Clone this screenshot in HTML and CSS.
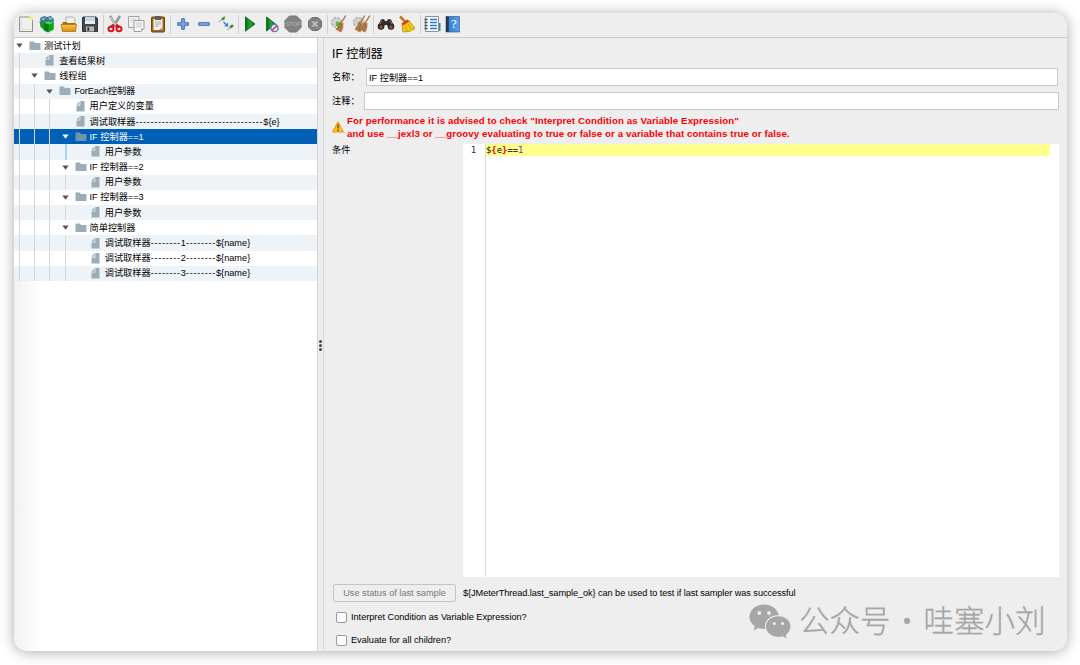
FILE: index.html
```html
<!DOCTYPE html>
<html lang="zh-CN">
<head>
<meta charset="utf-8">
<title>JMeter</title>
<link rel="stylesheet" href="styles.css">
</head>
<body>
<svg class="defs" width="0" height="0">
  <defs>
    <linearGradient id="green" x1="0" x2="1"><stop offset="0" stop-color="#0c6a14"/><stop offset=".5" stop-color="#22a52b"/><stop offset="1" stop-color="#087010"/></linearGradient>
    <linearGradient id="gold" x1="0" x2="0" y1="0" y2="1"><stop offset="0" stop-color="#f6c552"/><stop offset="1" stop-color="#d9900f"/></linearGradient>
    <linearGradient id="blue" x1="0" x2="1"><stop offset="0" stop-color="#2f77cf"/><stop offset="1" stop-color="#5a9de8"/></linearGradient>
    <symbol id="folder" viewBox="0 0 12 10"><path d="M.5 .5h4.200l1.300 1.500h5.500v7H.5z" fill="currentColor"/></symbol>
    <symbol id="leaf" viewBox="0 0 9 11"><path d="M4.300 0h4.200v10.600H.5V4.600h3.800z" fill="currentColor"/><path d="M3.500.2v3.600H.5z" fill="currentColor"/></symbol>
    <symbol id="arrow" viewBox="0 0 7 5"><path d="M.3.5h6.400L3.500 4.700z" fill="currentColor"/></symbol>
    <symbol id="broom" viewBox="0 0 12 18"><path d="M10.800.5 6.500 7.500" stroke="#a67340" stroke-width="1.400"/><path d="M5.200 6.500 8.500 8.300Q9 13 6.500 17.500L.5 14.500Q4 11 5.200 6.500z" fill="#b98450"/><path d="M5.500 8 2 15M7 8.500 4.500 16.500" stroke="#875328" stroke-width=".7"/></symbol>
    <symbol id="gear" viewBox="0 0 14 14"><circle cx="7" cy="7" r="5.200" fill="#d3d5d2" stroke="#b8b8b8" stroke-width="2" stroke-dasharray="2.900 1.200"/><circle cx="8.500" cy="8.500" r="2.500" fill="#5cb832"/></symbol>
  </defs>
</svg>
<div class="window">
  <header class="toolbar">
    <svg class="tool new" viewBox="0 0 18 18"><path d="M2.500 2h13v14.500h-13z" fill="#eef0e9" stroke="#8f928c"/><path d="M4.500 4v10.500h9" fill="none" stroke="#dcdeda"/><circle cx="14.500" cy="3" r="2.300" fill="#fbf3a0"/><circle cx="14.500" cy="3" r="1" fill="#f2df3c"/></svg>
    <svg class="tool templates" viewBox="0 0 18 18"><path d="m2 3 4-2 3 1 4-1 3 3-1 6-8 3-4-3z" fill="#3b7792"/><path d="m3 4 3-1.500 2 1-3 2zM10 3l3-1 2 2-3 1z" fill="#8fb7cb"/><path d="M1.500 6 6 7.500V15l-3.500-3z" fill="#179528"/><path d="m6 8 4-1.500 6 1-.3 7L10 17.500l-4-2z" fill="#0fa51b"/><path d="m6 8 5 1.500 5-2-6-1.200z" fill="#4bd548"/><path d="m11 9.500-.5 7.700L6 15.300V8z" fill="#087c14"/></svg>
    <svg class="tool open" viewBox="0 0 18 18"><path d="M6 2h7l2 2v6H6z" fill="#eee" stroke="#999" stroke-width=".7"/><path d="M2.500 7h4l1 1h8v8h-13z" fill="#a86c16"/><path d="M1 9.500h15.500l-1 7h-13z" fill="url(#gold)" stroke="#b1730f" stroke-width=".8"/></svg>
    <svg class="tool save" viewBox="0 0 18 18"><path d="M2 2h13l1.500 1.500V16.500h-15V2.500z" fill="#42474b" stroke="#2e3338"/><path d="M4 2h10v7H4z" fill="#e3edf4"/><path d="M4 3h10M4 5h10" stroke="#a9bccb"/><path d="M5 11.500h8v5H5z" fill="#b7b9bb"/><path d="M6.300 12.500h2v3.300h-2z" fill="#333"/></svg>
    <i class="separator"></i>
    <svg class="tool cut" viewBox="0 0 18 18"><path d="m4 1 7 11M14 1 7 12" stroke="#969b9f" stroke-width="2.600"/><path d="m4.500 2 6 9" stroke="#e3e5e7"/><path d="m8 10-3 2M10 10l3 2" stroke="#d31622" stroke-width="3"/><ellipse cx="5" cy="14" rx="2.500" ry="2.200" fill="none" stroke="#d9141f" stroke-width="2"/><ellipse cx="13" cy="14" rx="2.500" ry="2.200" fill="none" stroke="#d9141f" stroke-width="2"/></svg>
    <svg class="tool copy" viewBox="0 0 18 18"><path d="M1.500 1.500h10.500v11H1.500z" fill="#f2f2f2" stroke="#a2a2a2"/><path d="M3.500 4h6M3.500 6h6" stroke="#ccc"/><path d="M7 5.500h10v8l-3 3H7z" fill="#f6f6f6" stroke="#9b9b9b"/><path d="M9 8h6M9 10h6M9 12h5" stroke="#bbb" stroke-width=".8"/><path d="M14 16.500v-3h3z" fill="#aaa"/></svg>
    <svg class="tool paste" viewBox="0 0 18 18"><rect x="2.500" y="2" width="13" height="15" rx="1" fill="#a86414" stroke="#734008"/><path d="M4.500 4h9v11h-9z" fill="#f0f1ee"/><path d="M6 7h6M6 9h6M6 11h4" stroke="#aaa"/><path d="M6 1h6v4H6z" fill="#5a5c59"/><path d="m10 15 3.500-3v3z" fill="#999"/></svg>
    <i class="separator"></i>
    <svg class="tool plus" viewBox="0 0 18 18"><path d="M7.700 3.700h2.600v4h4v2.600h-4v4H7.700v-4h-4V7.700h4z" fill="#7fa9df" stroke="#356eaf"/></svg>
    <svg class="tool minus" viewBox="0 0 18 18"><path d="M3.700 7.700h10.600v2.600H3.700z" fill="#86afe2" stroke="#356eaf"/></svg>
    <svg class="tool toggle" viewBox="0 0 18 18"><path d="m1.500 7 5-3.500M10 15l4-3" stroke="#c3c8c0" stroke-width="2"/><path d="m5 4.500 2.500-1.800M13 12.500l3-2.300" stroke="#43853b" stroke-width="2.600"/><circle cx="7.500" cy="2.200" r="1" fill="#83bc57"/><path d="m6.500 7 4 4m0-3v3h-3" fill="none" stroke="#2e78ce" stroke-width="1.200"/></svg>
    <i class="separator"></i>
    <svg class="tool start" viewBox="0 0 18 18"><path d="M4.500 2v14L14 9z" fill="url(#green)" stroke="#12741b"/></svg>
    <svg class="tool no-pause" viewBox="0 0 18 18"><path d="M3.500 2v14l9-7z" fill="url(#green)" stroke="#12741b"/><circle cx="11.500" cy="13" r="3.600" fill="#e9f0fb" stroke="#4979bf" stroke-width="1.300"/><path d="m9 15.500 5-5" stroke="#df3434" stroke-width="1.600"/></svg>
    <svg class="tool stop" viewBox="0 0 18 18"><path d="M5.500 1h7L17 5.500v7L12.500 17h-7L1 12.500v-7z" fill="#828282" stroke="#777"/><text class="stop-text" x="9" y="11.300">STOP</text></svg>
    <svg class="tool shutdown" viewBox="0 0 18 18"><path d="M6 2.500h6L15.500 6v6L12 15.500H6L2.500 12V6z" fill="#828282" stroke="#737373"/><path d="m6.500 6.500 5 5m0-5-5 5" stroke="#bcbcbc" stroke-width="1.900"/></svg>
    <i class="separator"></i>
    <svg class="tool clear" viewBox="0 0 18 18"><use href="#gear" x="0" y="1" width="13" height="13"/><use href="#broom" x="5" y="0" width="12" height="18"/></svg>
    <svg class="tool clear-all" viewBox="0 0 18 18"><use href="#gear" x="0" y="1" width="13" height="13"/><use href="#broom" x="2" y="0" width="12" height="18"/><use href="#broom" x="7" y="0" width="12" height="18"/></svg>
    <i class="separator"></i>
    <svg class="tool search" viewBox="0 0 18 18"><path d="M4 4.500 7 4l1 2h2l1-2 3 .5L17 11l-5 2-2-3H8l-2 3-5-2z" fill="#30302f"/><circle cx="4" cy="11.500" r="3.300" fill="#2b2928"/><circle cx="14" cy="11.500" r="3.300" fill="#2b2928"/><circle cx="4" cy="12" r="1.700" fill="#96502c"/><circle cx="14" cy="12" r="1.700" fill="#96502c"/><path d="m5 6-2 3m10-3 2 3" stroke="#777"/></svg>
    <svg class="tool search-reset" viewBox="0 0 18 18"><path d="m2 1.500 5 5" stroke="#c07a22" stroke-width="2.600"/><path d="m4 9.500 7-4 6 8q-5 4-12 3.500z" fill="#f2cd16" stroke="#b88c05" stroke-width=".8"/><path d="m3.500 8.500 6-4 1.700 2-6.200 4z" fill="#dc3326"/><path d="m7 10.500 2 5m1-6.500 3.500 5" stroke="#b98f07" stroke-width=".8"/></svg>
    <i class="separator"></i>
    <svg class="tool functions" viewBox="0 0 18 18"><path d="M14 8h3.500v4H14z" fill="#3c72c0"/><path d="M14 12h3.500v4H14z" fill="#32a850"/><path d="M2.500 1.500h13v15h-13z" fill="#f6f9fd" stroke="#8894a1"/><path d="M7 4.500h7M7 7.500h7M7 10.500h7M7 13.500h7" stroke="#3978d5" stroke-width="1.400"/><path d="M1.500 4.500h3M1.500 7.500h3M1.500 10.500h3M1.500 13.500h3" stroke="#444" stroke-width="1.300"/></svg>
    <svg class="tool help" viewBox="0 0 18 18"><path d="M2 1.500h13.500v15.500H2z" fill="url(#blue)" stroke="#315f9f" stroke-width=".7"/><path d="M2 1.500h2.800V17H2z" fill="#2b394c"/><text class="help-text" x="10" y="13.300">?</text></svg>
  </header>
  <main class="body">
    <nav class="tree">
      <div class="row"><svg class="arrow"><use href="#arrow"/></svg><svg class="folder"><use href="#folder"/></svg><span>测试计划</span></div>
      <div class="row"><i></i><b></b><svg class="leaf"><use href="#leaf"/></svg><span>查看结果树</span></div>
      <div class="row"><i></i><svg class="arrow"><use href="#arrow"/></svg><svg class="folder"><use href="#folder"/></svg><span>线程组</span></div>
      <div class="row"><i></i><i></i><svg class="arrow"><use href="#arrow"/></svg><svg class="folder"><use href="#folder"/></svg><span class="foreach">ForEach控制器</span></div>
      <div class="row"><i></i><i></i><i></i><b></b><svg class="leaf"><use href="#leaf"/></svg><span>用户定义的变量</span></div>
      <div class="row"><i></i><i></i><i></i><b></b><svg class="leaf"><use href="#leaf"/></svg><span>调试取样器<em class="long">----------------------------------</em>${e}</span></div>
      <div class="row selected"><i></i><i></i><i></i><svg class="arrow"><use href="#arrow"/></svg><svg class="folder"><use href="#folder"/></svg><span>IF 控制器==1</span></div>
      <div class="row"><i></i><i></i><i></i><i class="active"></i><b></b><svg class="leaf"><use href="#leaf"/></svg><span>用户参数</span></div>
      <div class="row"><i></i><i></i><i></i><svg class="arrow"><use href="#arrow"/></svg><svg class="folder"><use href="#folder"/></svg><span>IF 控制器==2</span></div>
      <div class="row"><i></i><i></i><i></i><i></i><b></b><svg class="leaf"><use href="#leaf"/></svg><span>用户参数</span></div>
      <div class="row"><i></i><i></i><i></i><svg class="arrow"><use href="#arrow"/></svg><svg class="folder"><use href="#folder"/></svg><span>IF 控制器==3</span></div>
      <div class="row"><i></i><i></i><i></i><i></i><b></b><svg class="leaf"><use href="#leaf"/></svg><span>用户参数</span></div>
      <div class="row"><i></i><i></i><i></i><svg class="arrow"><use href="#arrow"/></svg><svg class="folder"><use href="#folder"/></svg><span>简单控制器</span></div>
      <div class="row"><i></i><i></i><i></i><i></i><b></b><svg class="leaf"><use href="#leaf"/></svg><span>调试取样器<em>--------</em>1<em>--------</em>${name}</span></div>
      <div class="row"><i></i><i></i><i></i><i></i><b></b><svg class="leaf"><use href="#leaf"/></svg><span>调试取样器<em>--------</em>2<em>--------</em>${name}</span></div>
      <div class="row"><i></i><i></i><i></i><i></i><b></b><svg class="leaf"><use href="#leaf"/></svg><span>调试取样器<em>--------</em>3<em>--------</em>${name}</span></div>
    </nav>
    <div class="splitter"><span></span><span></span><span></span></div>
    <section class="panel">
      <h1>IF 控制器</h1>
      <label class="field name"><span>名称<em>：</em></span><input type="text" value="IF 控制器==1"></label>
      <label class="field comment"><span>注释<em>：</em></span><input type="text"></label>
      <div class="warning">
        <svg viewBox="0 0 12 12"><path d="M6 .8 11.500 11H.5z" fill="#ffc21e" stroke="#ee9315" stroke-linejoin="round"/><path d="M6 3.500v4M6 8.500V10" stroke="#5b3a10" stroke-width="1.300"/></svg>
        <div><p class="w1">For performance it is advised to check "Interpret Condition as Variable Expression"</p><p class="w2">and use __jexl3 or __groovy evaluating to true or false or a variable that contains true or false.</p></div>
      </div>
      <div class="condition">
        <span class="caption">条件</span>
        <div class="editor"><div class="gutter">1</div><div class="code"><div class="line">$<b>{</b>e<b>}</b>==<u>1</u></div></div></div>
      </div>
      <div class="status"><button>Use status of last sample</button><span>${JMeterThread.last_sample_ok} can be used to test if last sampler was successful</span></div>
      <label class="check interpret"><input type="checkbox"><span>Interpret Condition as Variable Expression?</span></label>
      <label class="check evaluate"><input type="checkbox"><span>Evaluate for all children?</span></label>
    </section>
  </main>
</div>
<div class="watermark">
  <svg viewBox="0 0 42 35"><path d="M15 .5C6.800.5.500 6 .500 12.800c0 3.900 2 7 5.200 9.200L4.500 26.500l5-2.500c1.800.6 3.600.9 5.500.9h1.300C14.500 17 21 10.800 29.800 11.300 28.500 5 22.500.5 15 .5z" fill="#a6a6a6"/><path d="M29.300 12.300c-7 0-12.300 4.700-12.300 10.300s5.300 10.300 12.300 10.300c1.600 0 3-.3 4.400-.7l4 2.200-1-3.500c2.900-1.900 4.800-4.900 4.800-8.300 0-5.600-5.200-10.300-12.200-10.300z" fill="#a6a6a6"/><g fill="#eee"><circle cx="10.300" cy="9" r="1.900"/><circle cx="20" cy="9" r="1.900"/><circle cx="25.300" cy="19.500" r="1.600"/><circle cx="33.500" cy="19.500" r="1.600"/></g></svg>
  <span class="wm1">公众号</span><span class="dot">·</span><span class="wm2">哇塞小刘</span>
</div>
</body>
</html>
```
FILE: styles.css
```css
* { box-sizing: border-box; }
body { margin: 0; padding: 13px 14px 14px; width: 1080px; height: 665px; overflow: hidden; background: #fff; font: 9.2px/15px "Liberation Sans", "Noto Sans CJK SC", sans-serif; color: #000; }
.defs { position: absolute; }
.window { width: 1053px; height: 638px; border-radius: 13px; overflow: hidden; background: #eee; box-shadow: 0 1px 14px rgba(0,0,0,.34); display: flex; flex-direction: column; }
.toolbar { height: 25px; flex: none; display: flex; align-items: center; padding: 0 0 2px 3px; border-bottom: 1px solid #c9c9c9; }
.tool { width: 18px; height: 18px; margin-right: 3.4px; flex: none; }
.separator { width: 1px; height: 19px; background: #d1d1d1; margin: 0 2.5px 0 0; flex: none; }
.stop-text { font: 700 5.5px "Liberation Sans", sans-serif; text-anchor: middle; fill: #a9a9a9; }
.help-text { font: 13px "Liberation Serif", serif; text-anchor: middle; fill: #fff; }
.body { flex: 1; display: flex; min-height: 0; }
.tree { width: 303px; flex: none; background: linear-gradient(90deg, #f1f1f1, #fff 26px); }
.row { height: 15.2px; display: flex; align-items: center; padding-left: 5px; background: #fff; white-space: nowrap; }
.row span { padding-top: 1px; }
.row:nth-child(even) { background: #edf3f7; }
.row.selected { background: #0060b8; color: #fff; }
.row i { width: 15.2px; height: 100%; flex: none; border-left: 1px solid #d3d7da; }
.row i.active { border-color: #a7d2fa; border-width: 2px; }
.row b { width: 11px; flex: none; }
.row em { font-style: normal; letter-spacing: .7px; }
.foreach { letter-spacing: -.15px; }
.arrow { width: 7px; height: 5px; margin: 0 6px 0 -3px; color: #555; flex: none; }
.folder { width: 12px; height: 10px; margin-right: 3px; color: #9badb6; flex: none; }
.selected .arrow { color: #fff; }
.selected .folder { color: #6e94ae; }
.leaf { width: 9px; height: 11px; margin-right: 5px; color: #9badb6; flex: none; }
.splitter { width: 7px; flex: none; padding-top: 2px; border-left: 1px solid #d3d3d3; border-right: 1px solid #d8d8d8; display: flex; flex-direction: column; justify-content: center; align-items: center; gap: 1.500px; }
.splitter span { width: 2.500px; height: 2.500px; background: #444; border-radius: 2px; }
.panel { flex: 1; min-width: 0; padding: 7px 8px 0 7px; display: flex; flex-direction: column; align-items: stretch; }
h1 { margin: 0 0 4px 1px; font-size: 12.2px; font-weight: 400; line-height: 19px; }
.field { display: flex; align-items: center; height: 18px; padding-left: 1px; }
.field span { width: 34px; flex: none; }
.field em { font-style: normal; font-family: "Noto Sans CJK TC", sans-serif; line-height: 1; }
.field input { flex: 1; min-width: 0; height: 18px; border: 1px solid #c9c9c9; border-radius: 0; background: #fff; padding: 0 2px 1px; margin: 0; font: inherit; color: #000; outline: 0; }
.name { margin-right: 1px; }
.comment { margin-top: 6px; }
.comment span { width: 32px; }
.warning { margin: 3px 0 0 1px; height: 28px; display: flex; align-items: center; gap: 3px; color: #fb0005; font-weight: 700; font-size: 9.700px; letter-spacing: .09px; line-height: 13px; white-space: nowrap; }
.warning svg { width: 12px; height: 12px; }
.warning p { margin: 0; }
.condition { height: 433px; margin-top: 3px; display: flex; padding-left: 1px; }
.caption { width: 131px; flex: none; line-height: 13px; }
.editor { flex: 1; background: #fff; display: flex; font: 8.9px/12px "DejaVu Sans Mono", monospace; }
.gutter { width: 23px; border-right: 1px solid #ddd; text-align: right; padding-right: 9px; color: #20286f; }
.code { flex: 1; padding-right: 9px; }
.line { height: 12px; background: #ffff8d; color: #000; }
.line b { color: #f00; font-weight: 700; }
.line u { color: #7b2991; text-decoration: none; }
.status { margin: 7px 0 0 2px; height: 18px; display: flex; align-items: center; gap: 7px; }
.status span { letter-spacing: -.075px; }
button { width: 123px; height: 18px; padding: 0; font: inherit; color: #777; border: 1px solid #c4c4c4; border-radius: 2px; background: #eee; }
.check { display: flex; align-items: center; gap: 4px; padding-left: 5px; height: 12px; margin-top: 9px; }
.check span { letter-spacing: -.02px; }
.evaluate { margin-top: 11px; }
.check input { appearance: none; width: 11px; height: 11px; background: #fff; border: 1px solid #999; border-radius: 2px; margin: 0; }
.watermark { position: absolute; left: 749px; top: 603px; display: flex; align-items: center; height: 37px; font: 300 30.500px/37px "Noto Sans CJK SC", sans-serif; color: #a5a5a5; -webkit-text-stroke: .3px #a5a5a5; white-space: nowrap; }
.watermark svg { width: 42px; height: 35px; margin-right: 8px; }
.watermark span { padding-bottom: 4px; }
.dot { width: 33px; text-align: center; }
```
